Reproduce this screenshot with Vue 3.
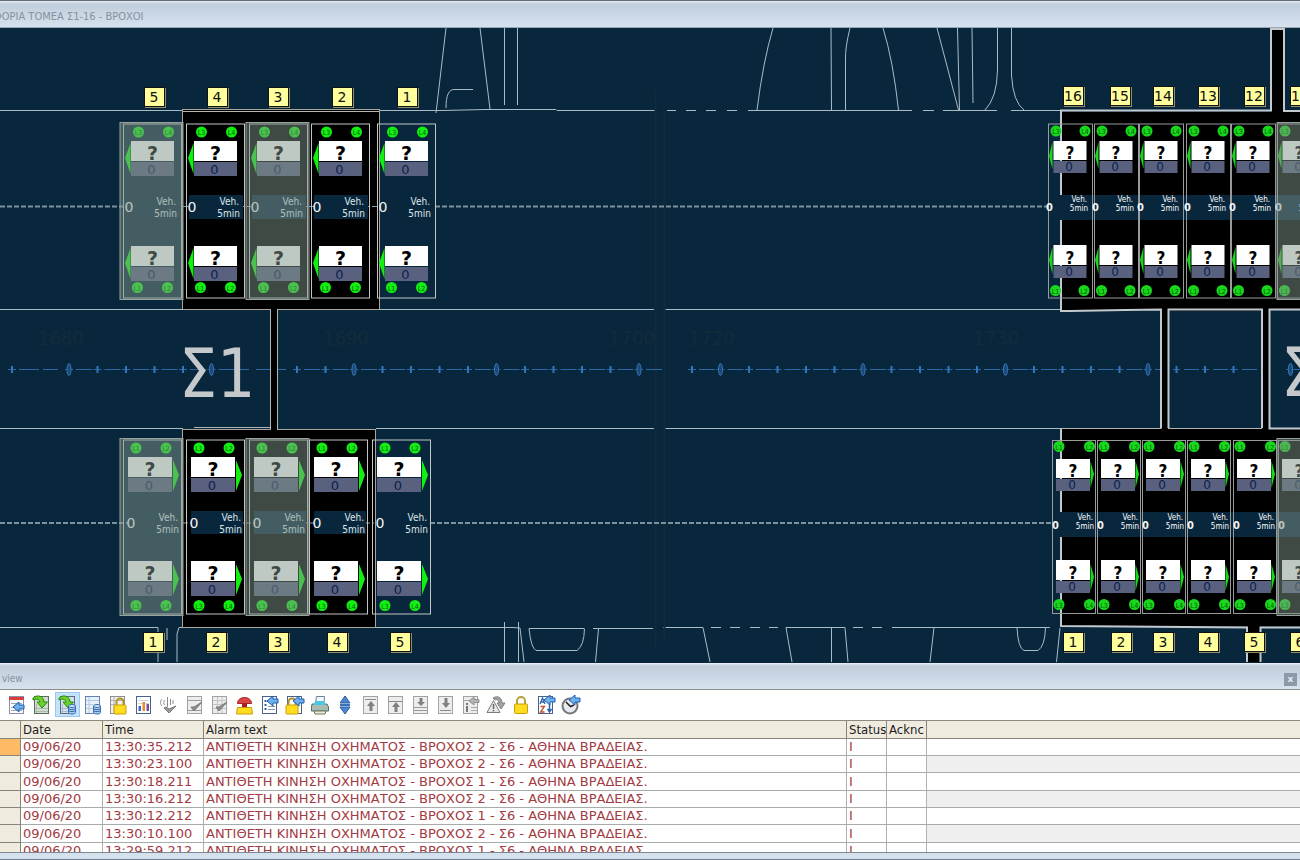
<script setup>
const range = (n) => Array.from({ length: n }, (_, i) => i)

/* ---- detector station geometry, one template per carriageway and gantry ---- */
const upperLeft = {
  size: 'lg',
  box: [186.5, 124, 58, 174],
  halo: [183, 122.5, 63, 177],
  lamps: [[201.5, 132, 'L3'], [231.5, 132, 'L4'], [200.5, 287.5, 'L1'], [230.5, 287.5, 'L2']],
  panelX: 194, panelW: 43, panels: [[141, 20, 14], [246, 20, 14]],
  arrows: ['188,158 193.5,143 193.5,174', '188,263 193.5,248 193.5,279'],
  strip: [189, 195, 54, 24],
  zero: [192, 212], veh: [240, 205, 217],
}
const lowerLeft = {
  size: 'lg',
  box: [186.5, 440, 58, 174],
  halo: [183, 438.5, 63, 177],
  lamps: [[199, 448, 'L1'], [229, 448, 'L2'], [199, 605.5, 'L3'], [229, 605.5, 'L4']],
  panelX: 191, panelW: 44, panels: [[457, 20, 14], [561, 20, 14]],
  arrows: ['242,475 236,460 236,491', '242,579 236,564 236,595'],
  strip: [191, 511, 52, 23],
  zero: [194, 528], veh: [242, 521, 533],
}
const upperRight = {
  size: 'sm',
  box: [1048.5, 124, 44, 174],
  halo: [1048, 122.5, 45, 177],
  lamps: [[1056, 131, 'L3'], [1085, 131, 'L4'], [1055.5, 290.5, 'L1'], [1084, 290.5, 'L2']],
  panelX: 1053.5, panelW: 33, panels: [[141, 19, 12], [245, 20, 12]],
  arrows: ['1049,156 1052.5,142 1052.5,169', '1049,260 1052.5,247 1052.5,274'],
  strip: [1049, 195, 46, 25],
  zero: [1049.5, 211], veh: [1088, 202, 211],
}
const lowerRight = {
  size: 'sm',
  box: [1052.5, 440.5, 43, 173],
  halo: [1051, 438.5, 45, 177],
  lamps: [[1059, 446.5, 'L1'], [1089.5, 446.5, 'L2'], [1059, 604.5, 'L3'], [1089.5, 604.5, 'L4']],
  panelX: 1056, panelW: 34, panels: [[459, 19, 12], [560, 20, 12]],
  arrows: ['1094,474 1090.5,461 1090.5,488', '1094,577 1090.5,564 1090.5,591'],
  strip: [1053, 512, 46, 25],
  zero: [1055.5, 529], veh: [1094, 520, 529],
}
const place = (g, list) => list.map(([dx, muted]) => ({ g, dx, muted: !!muted }))
const stations = [
  ...place(upperLeft, [[-63, 1], [0], [63, 1], [125], [191]]),
  ...place(lowerLeft, [[-63, 1], [0], [63, 1], [123], [186]]),
  ...place(upperRight, [[0], [46], [91], [138], [183], [229, 1]]),
  ...place(lowerRight, [[0], [45], [90], [135], [181], [226, 1]]),
]

const tags = [
  ...[[5, 144], [4, 207], [3, 268], [2, 332], [1, 397]].map(([n, x]) => ({ n, x, y: 87 })),
  ...[[16, 1063], [15, 1110], [14, 1153], [13, 1198], [12, 1244], [11, 1290]].map(([n, x]) => ({ n, x, y: 86 })),
  ...[[1, 143], [2, 206], [3, 268], [4, 327], [5, 390]].map(([n, x]) => ({ n, x, y: 632 })),
  ...[[1, 1063], [2, 1111], [3, 1153], [4, 1198], [5, 1244], [6, 1290]].map(([n, x]) => ({ n, x, y: 632 })),
]

/* ---- chainage line ---- */
const marks = [
  ...range(23).filter((i) => i !== 1 && i !== 8 && i !== 9).map((i) => ({ x: 12 + i * 28.5, big: i % 5 === 2 })),
  ...range(22).filter((i) => i !== 20).map((i) => ({ x: 692 + i * 28.5, big: i % 5 === 1 })),
]
const chainage = [['1680', 38], ['1690', 323], ['1700', 609], ['1720', 689], ['1730', 973]]

/* ---- toolbar ---- */
const sheet = (c = '#7f8fa3', f = '#f4f8fc') =>
  `<rect x="2.5" y="1.5" width="14" height="17" fill="${f}" stroke="${c}"/>`
const grid = (c) => `<path d="M3 5.5H16M3 9.5H16M3 13.5H16M7.5 2V18M12 2V18" stroke="${c}" fill="none"/>`
const lock = (x, y) =>
  `<path d="M${x + 2.5} ${y + 1}v-4a3.5 3.5 0 0 1 7 0v4" fill="none" stroke="#b09428" stroke-width="2"/><rect x="${x}" y="${y}" width="12" height="9" rx="1" fill="#ffdc1c" stroke="#c89c10"/>`
const blueArrow = (x, y) =>
  `<path d="M${x} ${y}l6-5v3h5v4h-5v3z" fill="#6fb0ee" stroke="#1c5eae"/>`
const greenArrow = '<path d="M1 3C5-1 12 1 12 7h3.500L10 13 5 7h3C8 5 5 3 1 5z" fill="#6ed12a" stroke="#258a10"/>'
const db = '<path d="M10.500 11v6.500c0 2 7 2 7 0V11z" fill="#a8ccf2" stroke="#3a6cb0"/><ellipse cx="14" cy="11" rx="3.500" ry="1.500" fill="#d8eaff" stroke="#3a6cb0"/><path d="M10.500 13.500c1 1.500 6 1.500 7 0M10.500 15.500c1 1.500 6 1.500 7 0" fill="none" stroke="#3a6cb0"/>'
const tick = '<path d="M6 12l3 4 8-9-8 5z" fill="#8e8e8e" stroke="#787878"/>'
const greySheet = sheet('#a2a2a2', '#ededed')
const icons = {
  stop: '<circle cx="7" cy="10" r="7" fill="#c8ccd4" stroke="#6c7078" stroke-width="2"/>',
  list: sheet('#8a8fa8', '#fff') + '<path d="M2 2h15v3H2z" fill="#d8403c"/><path d="M4 8.500H15M4 12.500H15M4 15.500H15" stroke="#9aa6b8"/>' + blueArrow(6, 12),
  load: sheet('#5c6c60', '#d2dcd2') + '<path d="M3 13.500H16M3 16.500H16M4.500 9v9" stroke="#a6bca6"/>' + greenArrow,
  loadDb: sheet('#5c6c80', '#d2e0ec') + '<path d="M3 13.500H10M3 16.500H10M4.500 9v9" stroke="#a6bccc"/>' + greenArrow + db,
  sheetDb: sheet('#6484b0', '#e8f1fa') + '<path d="M3 5.500H16M3 9.500H10M3 13.500H10M6 2V18" stroke="#b4c8de"/>' + db,
  sheetLock: sheet('#909090', '#f0f0f0') + '<path d="M3 5.500H16M3 9.500H7M6 2V18" stroke="#b0b0b0"/>' + lock(6, 10),
  chart: sheet('#4c608c', '#fff') + '<path d="M4 5.500H15M4 8.500H15" stroke="#ccd6e4"/><path d="M4.500 16v-5h2.500v5z" fill="#3a68c8"/><path d="M8.500 16V7h2.500v9z" fill="#f08a20"/><path d="M12.500 16v-7h2.500v7z" fill="#7a4a9c"/>',
  sound: '<path d="M3 4c-2 2-2 5 0 7M5.500 5c-1 2-1 3 0 5M8.500 2v10M11.500 4v6M14 5v4" fill="none" stroke="#8c8c8c"/><path d="M5 13l5 5 7-7-7 3-3-2z" fill="#9a9a9a" stroke="#7c7c7c"/>',
  ackOne: greySheet + '<path d="M3 5.500H16M3 15.500H16" stroke="#9c9c9c"/>' + tick,
  ackPage: greySheet + grid('#c4c4c4') + tick,
  horn: '<path d="M2.500 12.500h14l1 6.500h-16z" fill="#ffdc1c" stroke="#c89c10"/><path d="M7 8h5v4H7z" fill="#a82018"/><path d="M2.500 8.500c0-8 14-8 14 0z" fill="#dc4444" stroke="#a02828"/>',
  select: sheet('#4c608c', '#fff') + '<path d="M4.500 6h2M4.500 10h2M4.500 14h2" stroke="#2c62b0" stroke-width="2"/><path d="M8 11.500h7M8 14.500h7" stroke="#8492a8"/>' + blueArrow(7, 6),
  selectLock: sheet('#4c608c', '#fff') + lock(1, 10) + blueArrow(8, 6),
  print: '<path d="M5.500 8l1-6.500h8L14 8z" fill="#f2f8ff" stroke="#6e8296"/><path d="M2 9h15l1.500 3v4h-17v-4z" fill="#a8bcb4" stroke="#586c64"/><path d="M5 6h9l1 4H4z" fill="#48c8e4"/><path d="M4 16h12l-1 3H5z" fill="#e4ecd4" stroke="#6a7c64"/>',
  jump: '<path d="M10 1l5 7H5zM10 19l5-7H5z" fill="#4a86d4" stroke="#2c5c9c"/><path d="M5 10h10" stroke="#3a70b8" stroke-width="2"/>',
  first: greySheet + '<path d="M4 4.500H15" stroke="#8a8a8a"/><path d="M10 6l4 5h-2.500v5h-3v-5H6z" fill="#808080"/>',
  prev: greySheet + '<path d="M3 6.500H16" stroke="#8a8a8a"/><path d="M10 7l4 5h-2.500v5h-3v-5H6z" fill="#808080"/>',
  next: greySheet + '<path d="M3 12.500H16M3 15.500H16" stroke="#9a9a9a"/><path d="M10 11l4-4h-2.500V3h-3v4H6z" fill="#808080"/>',
  last: greySheet + '<path d="M4 15.500H15" stroke="#8a8a8a"/><path d="M10 13l4-5h-2.500V3h-3v5H6z" fill="#808080"/>',
  info: greySheet + '<path d="M3 5.500H9M10 12.500h6M10 15.500h6" stroke="#a8a8a8"/><path d="M6 8v2M6 11v6" stroke="#777" stroke-width="2"/><path d="M8 6l5-4v2.500h5v3h-5V10z" fill="#b4b4b4" stroke="#909090"/>',
  loop: '<path d="M7 3c5-3 9 0 9 5h3l-4 6-4-6h2c0-3-2-4-4-3z" fill="#a2a2a2" stroke="#808080"/><path d="M7.500 5.500L14 17.500H1z" fill="#e8e8e8" stroke="#7c7c7c"/><path d="M7.500 9v5M7.500 15v1.500" stroke="#666" stroke-width="1.500"/>',
  lock: '<path d="M6 9V6a4 4 0 0 1 8 0v3" fill="none" stroke="#b8a038" stroke-width="2"/><rect x="3.500" y="9" width="13" height="9.500" rx="1" fill="#ffdc1c" stroke="#c89c10"/>',
  sort: sheet('#4c608c', '#fff') + '<path d="M4 9l2.500-6L9 9M5 7h3" fill="none" stroke="#2c62b0" stroke-width="1.300"/><path d="M4.500 11.500h4l-4 5.500h4" fill="none" stroke="#c05028" stroke-width="1.300"/><path d="M13.500 8v8m-2-2l2 3 2-3" fill="none" stroke="#2c62b0" stroke-width="1.500"/>' + blueArrow(8, 5),
  clock: '<circle cx="9" cy="11" r="7.500" fill="#e8eaee" stroke="#74787f" stroke-width="2"/><path d="M5 7l4.500 4.500L13 10" fill="none" stroke="#222" stroke-width="1.500"/>' + blueArrow(8, 5),
}
const groups = [
  [['stop', 'Stop'], ['list', 'Message list'], ['load', 'Short-term archive']],
  [['loadDb', 'Long-term archive', true], ['sheetDb', 'Operation list'], ['sheetLock', 'Lock list']],
  [['chart', 'Hit list'], ['sound', 'Acknowledge signal']],
  [['ackOne', 'Single acknowledge'], ['ackPage', 'Group acknowledge'], ['horn', 'Emergency acknowledge'], ['select', 'Selection'], ['selectLock', 'Display options'], ['print', 'Print'], ['jump', 'Autoscroll']],
  [['first', 'First'], ['prev', 'Previous'], ['next', 'Next'], ['last', 'Last'], ['info', 'Info text'], ['loop', 'Loop in alarm'], ['lock', 'Lock'], ['sort', 'Sort'], ['clock', 'Time']],
]

const alarms = [['35.212', 2], ['23.100', 2], ['18.211', 1], ['16.212', 2], ['12.212', 1], ['10.100', 2]]
  .map(([t, loop]) => ({ time: `13:30:${t}`, loop }))
alarms.push({ time: '13:29:59.212', loop: 1 })
</script>

<template>
  <main class="app">
    <header class="titlebar"><h1>ΦΟΡΙΑ ΤΟΜΕΑ Σ1-16 - ΒΡΟΧΟΙ</h1></header>

    <svg class="map" viewBox="0 28 1300 635" role="img" aria-label="ΒΡΟΧΟΙ">
      <!-- carriageway edges and ramps -->
      <g class="road">
        <path d="M0 110.500H183M379 110.500H443L485 109.500H556L557 110.500H655M667 110.500h9M686 110.500h10M706 110.500h10M727 110.500h10M748 110.500H912M923 110.500h11M943 110.500h54M1011 110.500h50" />
        <path d="M0 309.500H183M380 309.500H654M665 309.500H1061M0 428.500H183M376 428.500H654M665 428.500H1061" />
        <path d="M0 627.500H158V662M167 628v12M177 662V634L179 627.500H183M376 627.500H513L520 628L524 662M504.500 622V662M518.500 622V662M593 628.500H653M598.500 628.500L595.500 662M663 627.500H703L710 662M711 627.500h10M730 627.500h10M750 627.500h10M769 627.500h9M786 627.500H845M786 627.500L792 662M831.500 627.500V662M848 662L845 627.500M853 627.500h10M872 627.500h10M892 627.500H1050M934 627.500L930 662" />
        <path d="M529 628.500H584M529 628.500Q531 648 536 650.500H577Q584 646 584.500 628.500M1017 627.500Q1018 648 1024 650.500H1038Q1045 646 1045.500 627.500M1060 628L1056.500 662" />
        <path d="M446 28L436 113M446 108C446 95 449 89.500 454 89.500H473M480 28L490 109M504.500 28V105M517.500 28V105" />
        <path d="M773 28Q763 62 757 110M831 28L831.500 110M850 28Q845 48 845.500 60V110M883 28Q893 60 898.500 110M937 28L958.500 110M957.500 28L959.500 110M972 28L973 103M997.500 28V70Q997 98 985 110M1011.500 28V75Q1013 102 1024 110" />
      </g>
      <path class="seam" d="M655.500 90V650M664.500 110V640" />
      <text v-for="[t, x] in chainage" :key="t" class="ghost" :x="x" y="345">{{ t }}</text>

      <!-- chainage line -->
      <g class="axis">
        <path v-for="m in marks" :key="m.x" :d="`M${m.x - 4} 369.500h8M${m.x + 7} 369.500h16`" />
        <template v-for="m in marks" :key="m.x">
          <ellipse v-if="m.big" :cx="m.x" cy="369.500" rx="2" ry="6" />
          <path v-else class="tick" :d="`M${m.x} 366v7`" />
        </template>
        <path d="M23 369.500h16M43 369.500h15M223 369.500h26M256 369.500h30" />
      </g>

      <!-- gantries -->
      <g class="gantry">
        <rect x="182.500" y="109.500" width="197" height="200" />
        <path class="thin" d="M183 111.500H379" />
        <rect x="182.500" y="429.500" width="193" height="198" />
        <path class="solid" d="M271 307h6v124h-6z" />
        <path class="thin" d="M270.500 309V429M277.500 309V429M194 427.500H270" />
        <path class="solid" d="M1061 112H1271V28H1284V112H1300V310H1269V429H1300V626H1260V662H1248V626H1061V429H1162V310H1061z" />
        <path class="solid" d="M1161 308h7v122h-7zM1263 308h6v122h-6z" />
        <path class="fill-map" d="M1168 311H1262V428H1168z" />
        <path class="thick" d="M1271 29V110.500H1061V311H1070L1125 310L1161 309.500V428.500M1168.500 428V309.500H1262V428M1300 309.500H1269.500V428.500H1300M1284 28V111H1300M1270 29h15M1061 429V626L1247 627.500V662M1300 627.500H1260.500V662" />
        <path class="thin" d="M1061 428.500H1161M1168 428.500H1262" />
      </g>
      <g class="axis">
        <path d="M1173 369.500h7M1184 369.500h15M1202 369.500h7M1213 369.500h15M1230 369.500h8M1242 369.500h15M1286 369.500h14" />
        <path class="tick" d="M1176.500 366v7M1205 366v7M1233.500 366v7" />
        <ellipse cx="1290.500" cy="369.500" rx="2" ry="6" />
      </g>

      <path class="lane" d="M0 206.500H183M435 206.500H1048M0 523H183M430 523H1052" />
      <path class="link" d="M183 206.500H380M183 523H374" />
      <rect class="strip" x="1049" y="195" width="251" height="25" />
      <rect class="strip" x="1053" y="512" width="247" height="25" />

      <text class="sector" x="179" y="397">Σ1</text>
      <text class="sector" x="1281" y="396">Σ</text>

      <!-- detector stations -->
      <g v-for="(s, i) in stations" :key="i" :class="s.g.size" :transform="`translate(${s.dx} 0)`">
        <rect class="strip" :x="s.g.strip[0]" :y="s.g.strip[1]" :width="s.g.strip[2]" :height="s.g.strip[3]" />
        <rect class="box" :x="s.g.box[0]" :y="s.g.box[1]" :width="s.g.box[2]" :height="s.g.box[3]" />
        <g v-for="[x, y, t] in s.g.lamps" :key="t">
          <circle class="green" :cx="x" :cy="y" r="5.500" />
          <text class="lamp" :x="x" :y="y + 3">{{ t }}</text>
        </g>
        <g v-for="([y, h, b], k) in s.g.panels" :key="k">
          <polygon class="green" :points="s.g.arrows[k]" />
          <rect class="white" :x="s.g.panelX" :y="y" :width="s.g.panelW" :height="h" />
          <rect class="slate" :x="s.g.panelX" :y="y + h + 1" :width="s.g.panelW" :height="b" />
          <text class="query" :x="s.g.panelX + s.g.panelW / 2" :y="y + h - 1">?</text>
          <text class="speed" :x="s.g.panelX + s.g.panelW / 2 - 1" :y="y + h + b - 1">0</text>
        </g>
        <text class="count" :x="s.g.zero[0]" :y="s.g.zero[1]">0</text>
        <text class="veh" :x="s.g.veh[0] - 1" :y="s.g.veh[1]">Veh.</text>
        <text class="veh" :x="s.g.veh[0]" :y="s.g.veh[2]">5min</text>
        <rect v-if="s.muted" class="veil" :x="s.g.halo[0]" :y="s.g.halo[1]" :width="s.g.halo[2]" :height="s.g.halo[3]" />
      </g>

      <g v-for="t in tags" :key="`${t.x}-${t.y}`">
        <rect class="tag-shadow" :x="t.x + 1" :y="t.y + 1" width="21" height="20" />
        <rect class="tag" :x="t.x + 0.5" :y="t.y + 0.5" width="20" height="19" />
        <text class="tag-text" :x="t.x + 10" :y="t.y + 15">{{ t.n }}</text>
      </g>
    </svg>

    <section class="panel">
      <header class="panel-bar">
        <h2>view</h2>
        <button type="button" class="close" aria-label="Close">x</button>
      </header>
      <div class="toolbar" role="toolbar">
        <div v-for="(g, gi) in groups" :key="gi" class="group">
          <button v-for="[icon, label, on] in g" :key="label" type="button" :class="{ on }" :aria-label="label">
            <svg viewBox="0 0 20 20" fill="none" v-html="icons[icon]" />
          </button>
        </div>
      </div>
      <div class="grid">
        <table>
          <colgroup>
            <col class="c-mark"><col class="c-date"><col class="c-time"><col class="c-text"><col class="c-flag"><col class="c-flag"><col>
          </colgroup>
          <thead>
            <tr><th></th><th>Date</th><th>Time</th><th>Alarm text</th><th>Status</th><th>Acknc</th><th></th></tr>
          </thead>
          <tbody>
            <tr v-for="a in alarms" :key="a.time">
              <td></td><td>09/06/20</td><td>{{ a.time }}</td>
              <td>ΑΝΤΙΘΕΤΗ ΚΙΝΗΣΗ ΟΧΗΜΑΤΟΣ - ΒΡΟΧΟΣ {{ a.loop }} - Σ6 - ΑΘΗΝΑ ΒΡΑΔΕΙΑΣ.</td>
              <td>I</td><td></td><td></td>
            </tr>
          </tbody>
        </table>
      </div>
    </section>
  </main>
</template>

<style>
body { margin: 0; }
</style>

<style scoped>
.app {
  display: flex;
  flex-direction: column;
  height: 100vh;
  overflow: hidden;
  background: #d6e1ee;
  font-family: "DejaVu Sans Condensed", "DejaVu Sans", sans-serif;
}
.titlebar {
  box-sizing: border-box;
  display: flex;
  align-items: center;
  height: 28px;
  flex: none;
  padding-top: 6px;
  border-top: 1px solid #666a78;
  border-bottom: 1px solid #9aa6b2;
  background: linear-gradient(#e4ebf2, #c0cddb 3px, #d6e2f0);
}
h1, h2 {
  margin: 0;
  font-size: 11px;
  font-weight: 400;
  line-height: 16px;
  color: #88929d;
  white-space: nowrap;
}
h1 { margin-left: -6px; }
h2 { font-size: 10px; }
.map {
  display: block;
  width: 100%;
  height: auto;
  flex: none;
  background: #09273c;
}
.road { fill: none; stroke: #a9bcc6; }
.seam { stroke: #122b3c; stroke-width: 2; }
.ghost { fill: #132b3a; font-size: 20px; }
.axis { fill: none; stroke: #2b66a6; }
.axis .tick { stroke: #3474b8; stroke-width: 2; }
.axis ellipse { fill: #1b4a78; stroke: #3474b8; }
.gantry rect { fill: #000; stroke: #aaa69c; }
.gantry .solid { fill: #000; }
.gantry .fill-map { fill: #09273c; }
.gantry .thin { fill: none; stroke: #b4b6b4; }
.gantry .thick { fill: none; stroke: #c4c9ce; stroke-width: 2; }
.lane { stroke: #7d919c; stroke-width: 2; stroke-dasharray: 5 2; }
.link { stroke: #8b9da6; stroke-dasharray: 5 2; }
.strip { fill: #09273c; }
.sector { fill: #c6c9cb; font-size: 67px; }
.box { fill: none; stroke: #c3c6c4; }
.green { fill: #12f012; }
.lamp { fill: #075a0c; font-size: 7px; text-anchor: middle; }
.white { fill: #fff; }
.slate { fill: #59617f; }
.query { fill: #000; font: bold 19px "DejaVu Sans", sans-serif; text-anchor: middle; }
.speed { fill: #0c1f4c; font: 13px "DejaVu Sans", sans-serif; text-anchor: middle; }
.count { fill: #f2f4f5; font: 14px "DejaVu Sans", sans-serif; text-anchor: middle; }
.veh { fill: #dde6ea; font-size: 10px; text-anchor: end; }
.sm .query { font: bold 17px "DejaVu Sans Condensed", sans-serif; }
.sm .speed { font-size: 12px; }
.sm .count { font: bold 11px "DejaVu Sans Condensed", sans-serif; }
.sm .veh { font: 8px "DejaVu Sans Condensed", sans-serif; fill: #fff; }
.sm .box { stroke: #989b99; }
.sm .green { fill: #18d81c; }
.veil { fill: rgb(127 148 138 / 0.5); stroke: #96a29c; }
.tag-shadow { fill: #8f8f70; }
.tag { fill: #ffff9c; stroke: #111; }
.tag-text { fill: #111; font: 14px "DejaVu Sans", sans-serif; text-anchor: middle; }

.panel {
  display: flex;
  flex-direction: column;
  flex: 1;
  min-height: 0;
  border-bottom: 1px solid #707c90;
  padding-bottom: 6px;
}
.panel-bar {
  box-sizing: border-box;
  display: flex;
  align-items: center;
  justify-content: space-between;
  height: 27px;
  flex: none;
  padding: 6px 3px 0 2px;
  border-bottom: 1px solid #8c8c84;
  background: linear-gradient(#eef3f8, #bfccda 3px, #d8e3f0);
}
.close {
  width: 13px;
  height: 13px;
  padding: 0;
  border: 0;
  background: #8d99a8;
  color: #e4eaf0;
  font: bold 9px/11px "DejaVu Sans", sans-serif;
}
.toolbar {
  box-sizing: border-box;
  display: flex;
  align-items: center;
  gap: 1px;
  height: 30px;
  flex: none;
  margin-left: -21px;
  padding-bottom: 1px;
  background: #fff;
}
.group { display: flex; }
.group button {
  display: flex;
  align-items: center;
  justify-content: center;
  width: 25px;
  height: 25px;
  padding: 0;
  border: 0;
  background: none;
}
.group button.on { background: #c4e2fa; box-shadow: inset 0 0 0 1px #98c8ee; }
.group svg { width: 20px; height: 20px; }
.grid {
  flex: 1;
  min-height: 0;
  overflow: hidden;
  border-top: 1px solid #8a8a7e;
  border-bottom: 1px solid #7c8894;
  background: #fff;
}
table {
  width: 100%;
  table-layout: fixed;
  border-collapse: separate;
  border-spacing: 0;
  font-size: 13px;
  line-height: 16px;
}
.c-mark { width: 21px; }
.c-date { width: 82px; }
.c-time { width: 101px; }
.c-text { width: 643px; }
.c-flag { width: 40px; }
th, td {
  box-sizing: border-box;
  height: 17px;
  padding: 0 0 0 2px;
  overflow: hidden;
  white-space: nowrap;
  text-align: left;
  font-weight: 400;
  border-right: 1px solid #b0b0ac;
  border-bottom: 1px solid #a8aca8;
}
th {
  height: 18px;
  background: #f0ebdf;
  color: #1c1c1c;
  border-color: #85857a;
}
td { color: #a23a42; font-family: "DejaVu Sans", sans-serif; }
tbody tr:nth-child(3n) td { height: 18px; }
td:first-child { background: #f0ebdf; border-color: #85857a; }
tbody tr:first-child td:first-child { background: #ffba68; }
tbody tr:nth-child(even) td:last-child { background: #efefef; }
th:last-child, td:last-child { border-right: 0; }
</style>
